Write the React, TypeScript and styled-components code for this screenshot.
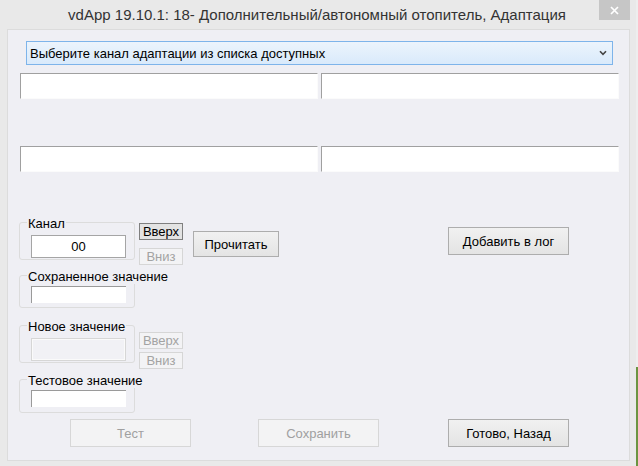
import React from "react";
import styled, { createGlobalStyle, css } from "styled-components";

const GlobalStyle = createGlobalStyle`
  html, body {
    margin: 0;
    padding: 0;
    background: #e9e9e9;
    overflow: hidden;
  }
  body {
    font-family: "Liberation Sans", Arial, sans-serif;
  }
`;

const Page = styled.div`
  display: flex;
  width: 638px;
  height: 466px;
`;

const Window = styled.div`
  width: 636px;
  height: 466px;
  background: #e9e9e9;
  display: flex;
  flex-direction: column;
`;

const DesktopEdge = styled.div`
  width: 2px;
  height: 466px;
  background: linear-gradient(to bottom, #eeeeee 0, #eeeeee 367px, #6b9440 367px);
`;

const TitleBar = styled.div`
  position: relative;
  height: 29px;
  display: flex;
  align-items: center;
  justify-content: center;
  padding-right: 2px;
`;

const Title = styled.div`
  font-size: 15px;
  line-height: 29px;
  color: #333333;
  white-space: nowrap;
`;

const CloseButton = styled.div`
  position: absolute;
  top: 0;
  right: 6px;
  width: 31px;
  height: 20px;
  background: #c6c6c6;
  display: flex;
  align-items: center;
  justify-content: center;
`;

const Client = styled.div`
  margin-left: 7px;
  width: 623px;
  height: 432px;
  box-sizing: border-box;
  border: 1px solid #dcdcdc;
  background: #efeff4;
  display: flex;
  flex-direction: column;
`;

const ChannelSelect = styled.div`
  margin: 11px 0 0 18px;
  width: 587px;
  height: 24px;
  box-sizing: border-box;
  border: 1px solid #7eb4ea;
  background: linear-gradient(#ecf4fc, #d9eafb);
  padding: 0 5px 0 3px;
  display: flex;
  align-items: center;
  justify-content: space-between;
  font-size: 13px;
  color: #000;
`;

const FieldRow = styled.div<{ $top: number }>`
  display: flex;
  gap: 3px;
  margin: ${({ $top }) => $top}px 0 0 12px;
`;

const TextField = styled.div`
  width: 298px;
  height: 26px;
  box-sizing: border-box;
  background: #ffffff;
  border-top: 1px solid #a0a0a0;
  border-left: 1px solid #a0a0a0;
  border-right: 1px solid #fbfbfb;
  border-bottom: 1px solid #fbfbfb;
`;

const ControlRow = styled.div<{ $top: number }>`
  display: flex;
  align-items: flex-start;
  margin: ${({ $top }) => $top}px 0 0 11px;
`;

const GroupBox = styled.div<{ $pb: number }>`
  width: 116px;
  flex-shrink: 0;
  box-sizing: border-box;
  border: 1px solid #dcdcdc;
  border-radius: 3px;
  padding: 0 0 ${({ $pb }) => $pb}px 11px;
`;

const GroupCaption = styled.div`
  width: max-content;
  margin: -7px 0 0 -4px;
  padding: 0 1px;
  line-height: 15px;
  font-size: 13px;
  color: #000;
  background: #efeff4;
`;

type InputKind = "boxed" | "sunken" | "disabled";

const ValueInput = styled.input<{ $kind: InputKind; $h: number; $mt: number }>`
  display: block;
  width: 95px;
  height: ${({ $h }) => $h}px;
  margin: ${({ $mt }) => $mt}px 0 0 0;
  padding: 0;
  box-sizing: border-box;
  font-family: "Liberation Sans", Arial, sans-serif;
  font-size: 13px;
  text-align: center;
  color: #000;
  outline: none;
  ${({ $kind }) =>
    $kind === "boxed"
      ? css`
          background: #fff;
          border: 1px solid #a5a5a5;
        `
      : $kind === "sunken"
      ? css`
          background: #fff;
          border: none;
          border-top: 1px solid #9a9a9a;
          border-left: 1px solid #9a9a9a;
        `
      : css`
          background: #f1f1f5;
          border: 1px solid #d6d6d6;
          box-shadow: inset 0 0 0 1px #fafafa;
        `}
`;

const SpinColumn = styled.div<{ $top: number; $gap: number }>`
  display: flex;
  flex-direction: column;
  gap: ${({ $gap }) => $gap}px;
  margin: ${({ $top }) => $top}px 0 0 4px;
`;

const SpinButton = styled.div<{ $disabled?: boolean }>`
  width: 44px;
  height: 17px;
  box-sizing: border-box;
  font-size: 13px;
  line-height: 15px;
  text-align: center;
  ${({ $disabled }) =>
    $disabled
      ? css`
          border: 1px solid #d6d6d6;
          background: #f3f3f5;
          color: #a3a3a3;
        `
      : css`
          border: 1px solid #7f7f7f;
          background: #e3e3e3;
          color: #000;
        `}
`;

const ActionButton = styled.button<{ $w: number; $h: number; $top?: number; $left?: number }>`
  flex-shrink: 0;
  width: ${({ $w }) => $w}px;
  height: ${({ $h }) => $h}px;
  margin: ${({ $top = 0 }) => $top}px 0 0 ${({ $left = 0 }) => $left}px;
  padding: 0;
  box-sizing: border-box;
  font-family: "Liberation Sans", Arial, sans-serif;
  font-size: 13px;
  border: 1px solid #adadad;
  border-radius: 0;
  background: linear-gradient(#f1f1f1, #e4e4e4);
  color: #000;
  &:disabled {
    border-color: #d7d7d7;
    background: #f3f3f4;
    color: #a0a0a0;
  }
`;

const BottomBar = styled.div`
  display: flex;
  margin: 6px 0 0 62px;
`;

const Chevron = () => (
  <svg width="8" height="6" viewBox="0 0 8 6">
    <path d="M1 1.2 L4 4.4 L7 1.2" fill="none" stroke="#444" strokeWidth="1.6" />
  </svg>
);

const CloseIcon = () => (
  <svg width="9" height="9" viewBox="0 0 9 9">
    <path d="M1 1 L8 8 M8 1 L1 8" stroke="#fff" strokeWidth="1.7" />
  </svg>
);

export default function App() {
  return (
    <Page>
      <GlobalStyle />
      <Window>
        <TitleBar>
          <Title>vdApp 19.10.1: 18- Дополнительный/автономный отопитель, Адаптация</Title>
          <CloseButton>
            <CloseIcon />
          </CloseButton>
        </TitleBar>
        <Client>
          <ChannelSelect>
            <span>Выберите канал адаптации из списка доступных</span>
            <Chevron />
          </ChannelSelect>
          <FieldRow $top={8}>
            <TextField />
            <TextField />
          </FieldRow>
          <FieldRow $top={47}>
            <TextField />
            <TextField />
          </FieldRow>

          <ControlRow $top={50}>
            <GroupBox $pb={1}>
              <GroupCaption>Канал</GroupCaption>
              <ValueInput $kind="boxed" $h={23} $mt={4} value="00" readOnly />
            </GroupBox>
            <SpinColumn $top={1} $gap={8}>
              <SpinButton>Вверх</SpinButton>
              <SpinButton $disabled>Вниз</SpinButton>
            </SpinColumn>
            <ActionButton $w={86} $h={26} $top={9} $left={10}>
              Прочитать
            </ActionButton>
            <ActionButton $w={121} $h={28} $top={5} $left={169}>
              Добавить в лог
            </ActionButton>
          </ControlRow>

          <ControlRow $top={10}>
            <GroupBox $pb={4}>
              <GroupCaption>Сохраненное значение</GroupCaption>
              <ValueInput $kind="sunken" $h={17} $mt={2} value="" readOnly />
            </GroupBox>
          </ControlRow>

          <ControlRow $top={17}>
            <GroupBox $pb={1}>
              <GroupCaption>Новое значение</GroupCaption>
              <ValueInput $kind="disabled" $h={23} $mt={4} value="" disabled />
            </GroupBox>
            <SpinColumn $top={7} $gap={3}>
              <SpinButton $disabled>Вверх</SpinButton>
              <SpinButton $disabled>Вниз</SpinButton>
            </SpinColumn>
          </ControlRow>

          <ControlRow $top={10}>
            <GroupBox $pb={5}>
              <GroupCaption>Тестовое значение</GroupCaption>
              <ValueInput $kind="sunken" $h={17} $mt={2} value="" readOnly />
            </GroupBox>
          </ControlRow>

          <BottomBar>
            <ActionButton $w={121} $h={28} disabled>
              Тест
            </ActionButton>
            <ActionButton $w={121} $h={28} $left={67} disabled>
              Сохранить
            </ActionButton>
            <ActionButton $w={121} $h={28} $left={69}>
              Готово, Назад
            </ActionButton>
          </BottomBar>
        </Client>
      </Window>
      <DesktopEdge />
    </Page>
  );
}
